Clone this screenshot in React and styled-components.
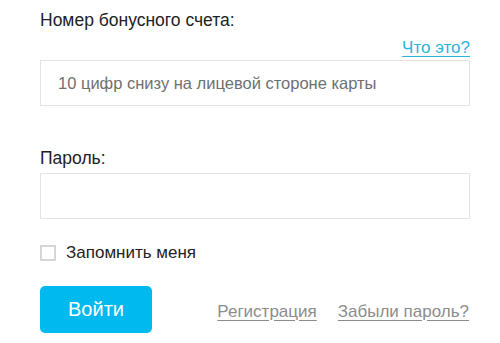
import React from "react";
import styled, { createGlobalStyle } from "styled-components";

const GlobalStyle = createGlobalStyle`
  html, body {
    margin: 0;
    padding: 0;
    background: #fff;
  }
  body {
    font-family: "Liberation Sans", Arial, sans-serif;
    color: #222;
  }
`;

const Form = styled.form`
  width: 430px;
  padding: 10px 0 0 40px;
  display: flex;
  flex-direction: column;
`;

const Label = styled.label`
  font-size: 17.5px;
  line-height: 20px;
  color: #222;
`;

const HelpRow = styled.div`
  display: flex;
  justify-content: flex-end;
  margin-top: 8px;
  height: 22px;
`;

const Link = styled.a`
  font-size: 17px;
  line-height: 20px;
  color: ${(p) => p.$color || "#8c8c8c"};
  text-decoration: underline;
  text-underline-offset: 3px;
  cursor: pointer;
`;

const Input = styled.input`
  box-sizing: border-box;
  width: 430px;
  height: 46px;
  border: 1px solid #e3e3e3;
  padding: 0 17px;
  font-family: inherit;
  font-size: 16.5px;
  outline: none;
  &::placeholder {
    color: #6f6f6f;
  }
`;

const Field = styled.div`
  display: flex;
  flex-direction: column;
  margin-top: ${(p) => p.$top || 0}px;
  gap: ${(p) => p.$gap || 0}px;
`;

const CheckRow = styled.label`
  display: flex;
  align-items: center;
  gap: 10px;
  margin-top: 24px;
  font-size: 17px;
  color: #222;
`;

const Box = styled.span`
  box-sizing: border-box;
  width: 16px;
  height: 16px;
  border: 2px solid #d6d6d6;
  background: #fff;
`;

const Actions = styled.div`
  display: flex;
  align-items: center;
  margin-top: 23px;
`;

const Button = styled.button`
  width: 112px;
  height: 47px;
  border: none;
  border-radius: 5px;
  background: #00b9ef;
  color: #fff;
  font-family: inherit;
  font-size: 20px;
  cursor: pointer;
`;

const Links = styled.div`
  margin-left: auto;
  margin-right: 1px;
  display: flex;
  gap: 21px;
  padding-top: 4px;
`;

export default function App() {
  return (
    <>
      <GlobalStyle />
      <Form onSubmit={(e) => e.preventDefault()}>
        <Label>Номер бонусного счета:</Label>
        <HelpRow>
          <Link $color="#2ab4da">Что это?</Link>
        </HelpRow>
        <Input placeholder="10 цифр снизу на лицевой стороне карты" />
        <Field $top={42} $gap={5}>
          <Label>Пароль:</Label>
          <Input type="password" />
        </Field>
        <CheckRow>
          <Box />
          Запомнить меня
        </CheckRow>
        <Actions>
          <Button type="submit">Войти</Button>
          <Links>
            <Link>Регистрация</Link>
            <Link>Забыли пароль?</Link>
          </Links>
        </Actions>
      </Form>
    </>
  );
}
